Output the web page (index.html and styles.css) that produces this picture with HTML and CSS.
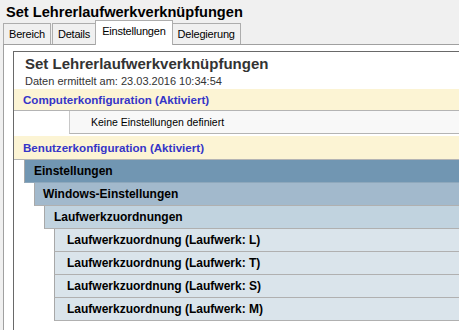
FILE: index.html
```html
<!DOCTYPE html>
<html lang="de">
<head>
  <meta charset="UTF-8">
  <title>Set Lehrerlaufwerkverknüpfungen</title>
  <link rel="stylesheet" href="styles.css">
</head>
<body>
<div class="title">Set Lehrerlaufwerkverknüpfungen</div>
<div class="tabs">
  <div class="tab">Bereich</div>
  <div class="tab">Details</div>
  <div class="tab active">Einstellungen</div>
  <div class="tab">Delegierung</div>
</div>
<div class="panel">
  <div class="report">
    <h1>Set Lehrerlaufwerkverknüpfungen</h1>
    <div class="date">Daten ermittelt am: 23.03.2016 10:34:54</div>
    <div class="section">Computerkonfiguration (Aktiviert)</div>
    <div class="empty">Keine Einstellungen definiert</div>
    <div class="section user">Benutzerkonfiguration (Aktiviert)</div>
    <div class="row lvl1">Einstellungen</div>
    <div class="row lvl2">Windows-Einstellungen</div>
    <div class="row lvl3">Laufwerkzuordnungen</div>
    <div class="row lvl4">Laufwerkzuordnung (Laufwerk: L)</div>
    <div class="row lvl4">Laufwerkzuordnung (Laufwerk: T)</div>
    <div class="row lvl4">Laufwerkzuordnung (Laufwerk: S)</div>
    <div class="row lvl4">Laufwerkzuordnung (Laufwerk: M)</div>
  </div>
</div>
</body>
</html>
```

FILE: styles.css
```css
body {
  margin: 0;
  background-color: #f0f0f0;
  font-family: "Liberation Sans", Arial, sans-serif;
  color: #000;
  overflow: hidden;
  height: 330px;
}

.title {
  font-size: 14.6px;
  font-weight: bold;
  padding: 3px 0 0 6px;
  height: 18px;
  line-height: 18px;
}

.tabs {
  display: flex;
  align-items: flex-end;
  margin-left: 3px;
  height: 23px;
}

.tab {
  height: 20px;
  line-height: 20px;
  font-size: 11px;
  letter-spacing: -0.2px;
  padding: 0 5px;
  border: 1px solid #adadad;
  border-bottom: none;
  background-color: #f0f0f0;
  margin-right: 1px;
}

.tab.active {
  position: relative;
  height: 24px;
  line-height: 21px;
  margin: 0 -1px -1px -2px;
  padding: 0 6px;
  background-color: #fff;
  z-index: 1;
}

.panel {
  margin: 0 -20px 0 3px;
  border: 1px solid #a0a0a0;
  background-color: #fff;
  padding: 6px 0 0 9px;
  height: 280px;
}

.report {
  border-left: 1px solid #696969;
  border-top: 1px solid #696969;
  height: 100%;
}

h1 {
  margin: 0;
  padding: 3px 0 0 11px;
  font-size: 15px;
  line-height: 18px;
  color: #333;
}

.date {
  padding-left: 11px;
  font-size: 11px;
  line-height: 16px;
  color: #333;
}

.section {
  height: 21px;
  line-height: 22px;
  padding-left: 9px;
  background-color: #fcf4d4;
  border-bottom: 1px solid #b4b4b4;
  color: #3535c8;
  font-weight: bold;
  font-size: 11.6px;
}

.section.user {
  height: 23px;
  line-height: 23px;
}

.empty {
  margin: 0 0 2px 55px;
  height: 22px;
  line-height: 22px;
  padding-left: 21px;
  background-color: #f8f8f8;
  border-left: 1px solid #c8c8c8;
  border-bottom: 1px solid #b4b4b4;
  font-size: 10.5px;
}

.row {
  height: 22px;
  line-height: 22px;
  font-weight: bold;
  font-size: 12px;
  border-left: 1px solid #a8a8a8;
  border-bottom: 1px solid #b0b0b0;
}

.lvl1 {
  margin-left: 10px;
  padding-left: 9px;
  background-color: #7196b2;
  border-bottom-color: #8ea8bc;
}

.lvl2 {
  margin-left: 20px;
  padding-left: 8px;
  background-color: #a2b9cc;
}

.lvl3 {
  margin-left: 30px;
  padding-left: 9px;
  background-color: #c1d3df;
}

.lvl4 {
  margin-left: 40px;
  padding-left: 12px;
  background-color: #dae4eb;
}
```
